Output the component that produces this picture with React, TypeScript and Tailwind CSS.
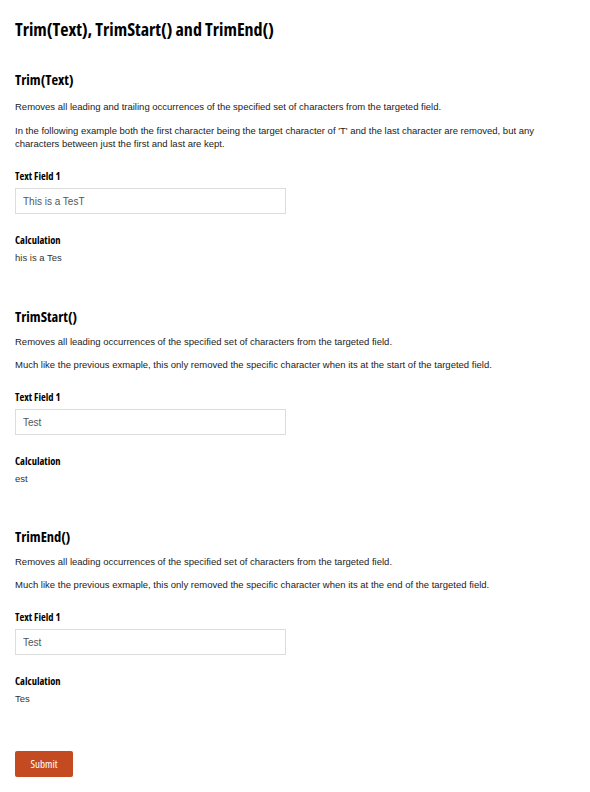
type Section = {
  title: string;
  paragraphs: string[];
  input: string;
  result: string;
  spacing: string;
};

const sections: Section[] = [
  {
    title: "Trim(Text)",
    paragraphs: [
      "Removes all leading and trailing occurrences of the specified set of characters from the targeted field.",
      "In the following example both the first character being the target character of 'T' and the last character are removed, but any characters between just the first and last are kept.",
    ],
    input: "This is a TesT",
    result: "his is a Tes",
    spacing: "mt-[29px]",
  },
  {
    title: "TrimStart()",
    paragraphs: [
      "Removes all leading occurrences of the specified set of characters from the targeted field.",
      "Much like the previous exmaple, this only removed the specific character when its at the start of the targeted field.",
    ],
    input: "Test",
    result: "est",
    spacing: "mt-[43px]",
  },
  {
    title: "TrimEnd()",
    paragraphs: [
      "Removes all leading occurrences of the specified set of characters from the targeted field.",
      "Much like the previous exmaple, this only removed the specific character when its at the end of the targeted field.",
    ],
    input: "Test",
    result: "Tes",
    spacing: "mt-[42px]",
  },
];

const condensed = "font-['Open_Sans',sans-serif] font-bold [font-stretch:75%] text-black";

function FormSection({ s, first }: { s: Section; first: boolean }) {
  return (
    <section className={s.spacing}>
      <h2 className={`${condensed} text-[14.5px] leading-[20px]`}>{s.title}</h2>
      <div className={`${first ? "mt-[10px] gap-[11px]" : "mt-[8px] gap-[10px]"} flex flex-col`}>
        {s.paragraphs.map((p) => (
          <p key={p} className="leading-[13px] pr-[12px]">
            {p}
          </p>
        ))}
      </div>
      <label className={`${condensed} block mt-[19px] text-[10.5px] leading-[14px]`}>Text Field 1</label>
      <input
        readOnly
        value={s.input}
        className="mt-[5px] block w-[271px] h-[26px] border border-[#dcdcdc] px-[7px] text-[10px] text-[#555] outline-none font-['Liberation_Sans',Arial,sans-serif]"
      />
      <div className={`${condensed} mt-[19px] text-[10.5px] leading-[14px]`}>Calculation</div>
      <div className="mt-[4px] leading-[13px] text-[#333]">{s.result}</div>
    </section>
  );
}

export default function App() {
  return (
    <div className="bg-white min-h-[792px] px-[15px] pt-[17px] pb-[15px] font-['Liberation_Sans',Arial,sans-serif] text-[9.5px] text-[#222]">
      <h1 className={`${condensed} text-[18px] leading-[24px]`}>
        Trim(Text), TrimStart() and TrimEnd()
      </h1>
      {sections.map((s, i) => (
        <FormSection key={s.title} s={s} first={i === 0} />
      ))}
      <button
        type="button"
        className="mt-[46px] block w-[58px] h-[26px] rounded-[2px] bg-[#c44a22] font-['Open_Sans',sans-serif] [font-stretch:75%] text-[11px] text-white"
      >
        Submit
      </button>
    </div>
  );
}
